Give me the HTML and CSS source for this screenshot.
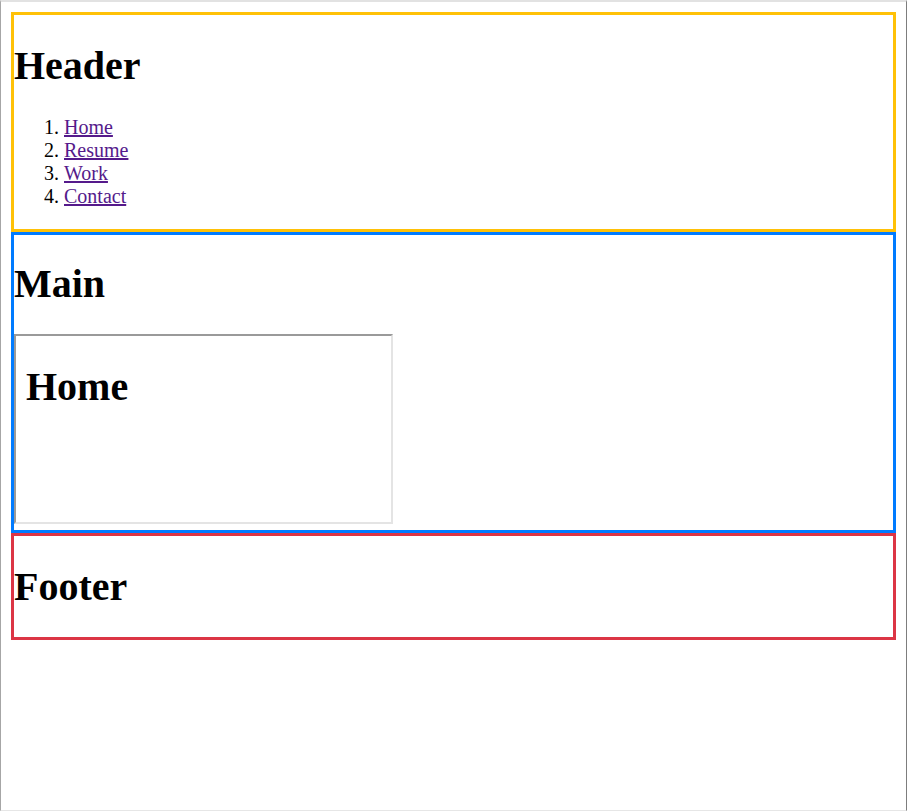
FILE: index.html
```html
<!DOCTYPE html>
<html>
<head>
<meta charset="utf-8">
<title>Layout</title>
<link rel="stylesheet" href="styles.css">
</head>
<body>
<div class="frame">
  <header class="box box-header">
    <h1 class="title">Header</h1>
    <ol class="nav">
      <li><a href="#home">Home</a></li>
      <li><a href="#resume">Resume</a></li>
      <li><a href="#work">Work</a></li>
      <li><a href="#contact">Contact</a></li>
    </ol>
  </header>
  <main class="box box-main">
    <h1 class="title title-main">Main</h1>
    <div class="pane">
      <h1 class="pane-title">Home</h1>
    </div>
  </main>
  <footer class="box box-footer">
    <h1 class="title title-footer">Footer</h1>
  </footer>
</div>
</body>
</html>
```
FILE: styles.css
```css
html, body {
  margin: 0;
  padding: 0;
  background: #ffffff;
}

body {
  font-family: "Liberation Serif", "Times New Roman", serif;
  font-size: 20px;
  color: #000000;
}

.frame {
  box-sizing: border-box;
  width: 907px;
  height: 811px;
  border-left: 1px solid #a6a6a6;
  border-top: 2px solid #e2e2e2;
  border-right: 1px solid #7d7d7d;
  border-bottom: 1px solid #e6e6e6;
  padding: 10px;
  overflow: hidden;
}

.box {
  display: block;
  border: 3px solid;
}

.box-header { border-color: #ffc107; }
.box-main { border-color: #007bff; }
.box-footer { border-color: #dc3545; }

.title {
  font-size: 40px;
  font-weight: bold;
  margin: 26.8px 0;
}

.title-main {
  margin-top: 25.8px;
  margin-bottom: 26.8px;
}

.title-footer {
  margin-bottom: 27.5px;
}

.nav {
  margin: 20px 0 21px;
  padding-left: 50px;
}

.nav a {
  color: #551a8b;
  text-decoration: underline;
}

.pane {
  box-sizing: border-box;
  width: 379px;
  height: 190px;
  margin-bottom: 6px;
  border-style: solid;
  border-width: 2px;
  border-color: #9a9a9a #e4e4e4 #e4e4e4 #9a9a9a;
  padding: 10px;
  overflow: hidden;
}

.pane-title {
  font-size: 40px;
  font-weight: bold;
  margin: 17px 0 0;
}
```
